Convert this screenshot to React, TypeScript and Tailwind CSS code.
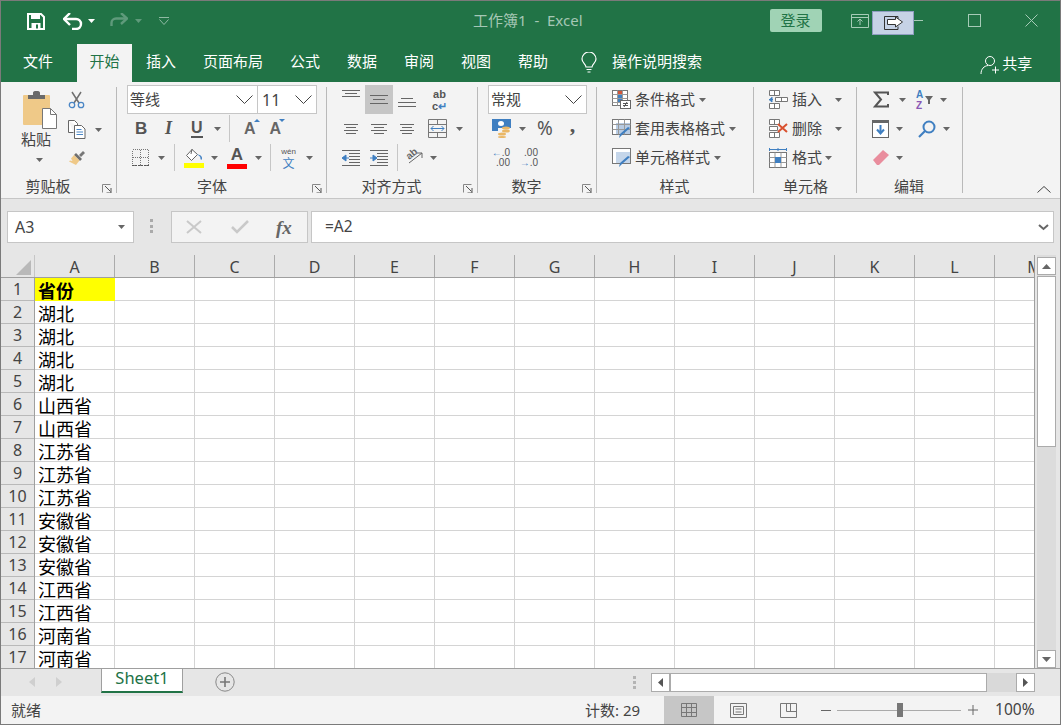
import type { ReactNode } from 'react';

const cjk = { fontFamily: '"Noto Sans CJK SC", "Noto Sans", sans-serif' };

const rows = ['省份', '湖北', '湖北', '湖北', '湖北', '山西省', '山西省', '江苏省', '江苏省', '江苏省', '安徽省', '安徽省', '安徽省', '江西省', '江西省', '河南省', '河南省'];
const cols = ['A', 'B', 'C', 'D', 'E', 'F', 'G', 'H', 'I', 'J', 'K', 'L', 'M'];

function Caret({ className = 'ml-[8px]', color = '#666' }: { className?: string; color?: string }) {
  return (
    <svg width="7" height="4" viewBox="0 0 7 4" className={`shrink-0 ${className}`}>
      <path d="M0 0h7L3.500 4z" fill={color} />
    </svg>
  );
}

function Chevron({ className = '' }: { className?: string }) {
  return (
    <svg width="17" height="9" viewBox="0 0 17 9" className={className}>
      <path d="M.5.500l8 8 8-8" fill="none" stroke="#444" />
    </svg>
  );
}

function Launcher({ className = '' }: { className?: string }) {
  return (
    <svg width="10" height="9" viewBox="0 0 10 9" className={className}>
      <path d="M.5 8.500v-8h8" fill="none" stroke="#888" />
      <path d="M3 2l5.500 5.500M9 4v5H4.500" fill="none" stroke="#555" />
    </svg>
  );
}

function Lines({ w = 18, widths, gap = 3 }: { w?: number; widths: number[]; gap?: number }) {
  const h = (widths.length - 1) * gap + 1;
  return (
    <svg width={w} height={h} viewBox={`0 0 ${w} ${h}`}>
      {widths.map((x, i) => (
        <rect key={i} x={(w - x) / 2} y={i * gap} width={x} height="1" fill="#666" />
      ))}
    </svg>
  );
}

function Group({ w, label, launcher, children, labelClass }: { w: number; label: string; launcher?: boolean; children: ReactNode; labelClass?: string }) {
  return (
    <div className="relative flex shrink-0 flex-col" style={{ width: w }}>
      <div className="h-[87px] shrink-0">{children}</div>
      <div className={`h-[28px] pt-[6px] text-center text-[15px] leading-[22px] text-[#444] ${labelClass ?? ''}`}>{label}</div>
      <div className="absolute right-0 top-[5px] h-[106px] w-px bg-[#b9b9b9]" />
      {launcher && <Launcher className="absolute right-[5px] top-[102px]" />}
    </div>
  );
}

function Row({ className = '', children }: { className?: string; children: ReactNode }) {
  return <div className={`flex h-[29px] items-center ${className}`}>{children}</div>;
}

function Sep() {
  return <div className="h-[27px] w-px bg-[#c6c6c6]" />;
}

function PasteIcon() {
  return (
    <svg width="35" height="40" viewBox="0 0 35 40">
      <rect x="0" y="5" width="27" height="30" rx="1" fill="#efc988" />
      <path d="M5 9V5h5V2.500a2 2 0 0 1 2-1.500h3a2 2 0 0 1 2 1.500V5h5v4z" fill="#6a6a6a" />
      <path d="M19.500 18.500h8l6 6v14h-14z" fill="#fff" stroke="#777" />
      <path d="M27.500 18.500v6h6" fill="none" stroke="#777" />
    </svg>
  );
}

function ScissorsIcon() {
  return (
    <svg width="17" height="18" viewBox="0 0 17 18">
      <path d="M4 1l7 11M13 1L6 12" stroke="#6f6f6f" strokeWidth="1.500" fill="none" />
      <circle cx="4" cy="14" r="2.700" fill="none" stroke="#4a86c5" strokeWidth="1.300" />
      <circle cx="13" cy="14" r="2.700" fill="none" stroke="#4a86c5" strokeWidth="1.300" />
    </svg>
  );
}

function CopyIcon() {
  return (
    <svg width="18" height="19" viewBox="0 0 18 19">
      <path d="M.5.500h6l3 3v3M.5.500v12h5" fill="#fff" stroke="#666" />
      <path d="M6.500 5.500h7l3.500 3.500v9.500H6.500z" fill="#fff" stroke="#666" />
      <path d="M8.500 9.500h5M8.500 12h6.500M8.500 14.500h6.500" stroke="#4a86c5" />
    </svg>
  );
}

function BrushIcon() {
  return (
    <svg width="18" height="16" viewBox="0 0 18 16">
      <path d="M11 5l4-4 2 2-4 4z" fill="#777" />
      <path d="M8 3l6 6-2 2-6-6z" fill="#6f6f6f" />
      <path d="M6 5l5.500 5.500L8 15 1 11.500l1-1 2.500.5L3 8.500z" fill="#efc988" />
    </svg>
  );
}

function BordersIcon() {
  return (
    <svg width="17" height="17" viewBox="0 0 17 17" shapeRendering="crispEdges">
      <path d="M.5.500h16v16H.5zM8.500.500v16M.5 8.500h16" fill="none" stroke="#777" strokeDasharray="1 1" />
      <path d="M0 16.500h17" stroke="#555" strokeDasharray="2 1" />
    </svg>
  );
}

function FillIcon() {
  return (
    <svg width="20" height="20" viewBox="0 0 20 20">
      <path d="M8 1.500L2.500 7.500l5 5 6-6z" fill="#fff" stroke="#666" />
      <path d="M8 1l-1 5" stroke="#666" />
      <path d="M13.500 6.500c2 0 4 1 4.500 3v1.500c0 1-1.500 1-1.500 0 0-2-1-3.500-3-4z" fill="#4a86c5" />
      <rect x="0" y="15" width="20" height="5" fill="#ffff00" />
    </svg>
  );
}

function AccountingIcon() {
  return (
    <svg width="19" height="19" viewBox="0 0 19 19">
      <rect x="0" y="0" width="19" height="9" fill="#3f7fc1" />
      <path d="M0 9h6v3H0z" fill="#3f7fc1" />
      <ellipse cx="9" cy="4.500" rx="3" ry="2.500" fill="#fff" />
      <ellipse cx="14" cy="9" rx="4" ry="1.500" fill="#eab765" />
      <ellipse cx="14" cy="12" rx="4" ry="1.500" fill="#eab765" />
      <ellipse cx="10" cy="15" rx="4" ry="1.500" fill="#eab765" />
      <ellipse cx="10" cy="18" rx="4" ry="1" fill="#eab765" />
    </svg>
  );
}

function IndentIcon({ right }: { right?: boolean }) {
  return (
    <svg width="18" height="16" viewBox="0 0 18 16">
      <path d="M0 .5h18M7 3.500h11M7 6.500h11M7 9.500h11M7 12.500h11M0 15.500h18" stroke="#666" />
      {right ? <path d="M0 8h3V5l4 3-4 3V8" fill="#3f7fc1" stroke="#3f7fc1" /> : <path d="M7 8H4V5L0 8l4 3V8" fill="#3f7fc1" stroke="#3f7fc1" />}
    </svg>
  );
}

function TableStyleIcon({ brush }: { brush?: boolean }) {
  return (
    <svg width="19" height="19" viewBox="0 0 19 19">
      <rect x=".5" y=".5" width="18" height="15" fill="#fff" stroke="#777" />
      <rect x="4" y="4" width="14" height="11" fill={brush ? '#b7cbe3' : '#c5d6ea'} />
      {brush && <path d="M.5 5.500h18M.5 10.500h18M6.500.5v15M12.500.5v15" stroke="#999" />}
      <path d="M18 9l-8 7-3 3 1-4 8-7z" fill="#3f7fc1" />
    </svg>
  );
}

function CondIcon() {
  return (
    <svg width="19" height="19" viewBox="0 0 19 19">
      <rect x=".5" y=".5" width="15" height="15" fill="#fff" stroke="#777" />
      <path d="M5.500.5v15M10.500.5v15M.5 4.500h15M.5 8.500h15M.5 12.500h15" stroke="#999" />
      <rect x="6" y="1" width="4" height="3" fill="#d2553a" />
      <rect x="6" y="5" width="4" height="3" fill="#3f7fc1" />
      <rect x="6" y="9" width="4" height="3" fill="#3f7fc1" />
      <rect x="8.500" y="10.500" width="10" height="8" fill="#fff" stroke="#666" />
      <path d="M11 13.500h5M11 15.500h5M12 17l3-5" stroke="#555" />
    </svg>
  );
}

function CellsIcon({ kind }: { kind: 'insert' | 'delete' | 'format' }) {
  if (kind === 'format') {
    return (
      <svg width="18" height="20" viewBox="0 0 18 20">
        <path d="M0 1.500h18M.5 0v3M9 0v3M17.500 0v3" stroke="#3f7fc1" />
        <rect x=".5" y="4.500" width="17" height="15" fill="#fff" stroke="#777" />
        <path d="M6 4.500v15M12 4.500v15M.5 9.500h17M.5 14.500h17" stroke="#999" />
        <rect x="6" y="9" width="6" height="6" fill="#3f7fc1" />
      </svg>
    );
  }
  return (
    <svg width="19" height="19" viewBox="0 0 19 19">
      <path d="M.5.500h10v5H.5zM5.500.500v5M.5 13.500h10v5H.5zM5.500 13.500v5" fill="#fff" stroke="#777" />
      {kind === 'insert' ? (
        <>
          <path d="M6.500 7.500h12v4h-12zM12.500 7.500v4" fill="#fff" stroke="#777" />
          <path d="M0 9.500h4M3 7v5L0 9.500" fill="#3f7fc1" stroke="#3f7fc1" />
        </>
      ) : (
        <>
          <path d="M.5 7.500h8v4h-8z" fill="#fff" stroke="#777" />
          <path d="M9 5l9 8M18 5l-9 8" stroke="#d9512f" strokeWidth="2" />
        </>
      )}
    </svg>
  );
}

function Cells() {
  return (
    <div className="flex h-[23px] shrink-0">
      {cols.map(c => (
        <div key={c} className="h-full w-[80px] shrink-0 border-b border-r border-[#d4d4d4] bg-white" />
      ))}
    </div>
  );
}

export default function App() {
  return (
    <div className="flex h-[725px] w-[1061px] flex-col overflow-hidden border border-[#7a7a7a] bg-[#e6e6e6] text-[15px] text-[#444]" style={cjk}>
      <div className="relative h-[81px] shrink-0 bg-[#217346] text-white">
        {/* title row */}
        <div className="flex h-[40px] items-center">
          <svg width="18" height="17" viewBox="0 0 18 17" className="ml-[26px]">
            <path d="M1 1h13l3 3v12H1z" fill="none" stroke="#fff" strokeWidth="2" />
            <path d="M4 1h9v5H4zM4.500 10h9v6h-9z" fill="#fff" />
            <rect x="9" y="11.500" width="2" height="4" fill="#217346" />
          </svg>
          <svg width="20" height="17" viewBox="0 0 20 17" className="ml-[18px]">
            <path d="M2 6h11a5 5 0 0 1 0 10H9" fill="none" stroke="#fff" strokeWidth="2.400" />
            <path d="M7 0L1 6l6 6" fill="none" stroke="#fff" strokeWidth="2.400" />
          </svg>
          <Caret className="ml-[5px]" color="#fff" />
          <svg width="19" height="15" viewBox="0 0 19 15" className="ml-[14px] mt-[-2px]">
            <path d="M17 5.500H7a4.500 4.500 0 0 0-4.500 4.500v3" fill="none" stroke="#5f9a7b" strokeWidth="2.400" />
            <path d="M12 0l6 5.500-6 5.500" fill="none" stroke="#5f9a7b" strokeWidth="2.400" />
          </svg>
          <Caret className="ml-[7px]" color="#5f9a7b" />
          <svg width="10" height="8" viewBox="0 0 10 8" className="ml-[17px]">
            <path d="M0 .5h10M.5 2.500L5 7.500l4.500-5" fill="none" stroke="#8fbaa3" />
          </svg>
          <div className="ml-[304px] mt-[-2px] whitespace-pre text-[15px] text-[#a5c7b5]" style={{ fontFamily: '"Noto Sans", "Noto Sans CJK SC", sans-serif' }}>工作簿1  -  Excel</div>
          <div className="ml-[187px] mt-[-2px] flex h-[23px] w-[52px] items-center justify-center rounded-[2px] bg-[#a0d3b5] text-[15px] text-[#217346]">登录</div>
          <svg width="18" height="14" viewBox="0 0 18 14" className="ml-[29px] mt-[-1px]">
            <path d="M.5.500h17v13H.5zM.5 3.500h17" fill="none" stroke="#a6cbb7" />
            <path d="M9 11V5M6.500 7.500L9 5l2.500 2.500" fill="none" stroke="#a6cbb7" />
          </svg>
          <div className="ml-[45px] mt-[-1px] h-px w-[9px] bg-[#a6cbb7]" />
          <div className="ml-[45px] mt-[-1px] h-[13px] w-[13px] border border-[#a6cbb7]" />
          <svg width="13" height="13" viewBox="0 0 13 13" className="ml-[44px] mt-[-1px]">
            <path d="M.5.500l12 12M12.500.500l-12 12" stroke="#a6cbb7" />
          </svg>
        </div>
        {/* floating button sitting over the window controls */}
        <div className="absolute left-[871px] top-[10px] flex h-[24px] w-[42px] items-center justify-center border border-[#8f9dc0] bg-[#c6d2e6]">
          <svg width="19" height="14" viewBox="0 0 19 14">
            <path d="M14 .5H.5v13H14v-3M14 3.500V.5" fill="none" stroke="#333" />
            <path d="M3.500 3.500h8V1l7 5-7 5V8.500h-8z" fill="#fff" stroke="#333" />
          </svg>
        </div>
        {/* tab row */}
        <div className="flex h-[41px] items-end text-[15px]">
          <div className="ml-[22px] h-[38px] w-[30px] whitespace-nowrap leading-[34px]">文件</div>
          <div className="ml-[24px] h-[38px] w-[55px] bg-[#f3f3f3] text-center leading-[34px] text-[#217346]">开始</div>
          <div className="ml-[14px] flex h-[38px] gap-[27px] whitespace-nowrap leading-[34px]">
            <span>插入</span>
            <span>页面布局</span>
            <span>公式</span>
            <span>数据</span>
            <span>审阅</span>
            <span>视图</span>
            <span>帮助</span>
          </div>
          <svg width="16" height="21" viewBox="0 0 16 21" className="mb-[9px] ml-[33px]">
            <path d="M5 15c0-3-4-4-4-8a7 7 0 0 1 14 0c0 4-4 5-4 8z" fill="none" stroke="#fff" strokeWidth="1.200" />
            <path d="M5.500 17.500h5M6.500 20h3" stroke="#fff" />
          </svg>
          <div className="ml-[15px] h-[38px] whitespace-nowrap leading-[34px]">操作说明搜索</div>
          <svg width="20" height="20" viewBox="0 0 20 20" className="mb-[7px] ml-[278px]">
            <circle cx="10" cy="6" r="4.500" fill="none" stroke="#fff" />
            <path d="M1 19c0-5 3-8 7-8.500M12 15h7M15.500 11.500v7" fill="none" stroke="#fff" />
          </svg>
          <div className="ml-[2px] h-[37px] whitespace-nowrap leading-[36px]">共享</div>
        </div>
      </div>

      {/* ribbon */}
      <div className="flex h-[117px] shrink-0 border-b border-[#c6c6c6] bg-[#f3f3f3]">
        <Group w={116} label="剪贴板" launcher labelClass="pr-[22px]">
          <div className="flex pt-[8px]">
            <div className="ml-[22px] flex w-[35px] flex-col items-start">
              <PasteIcon />
              <div className="ml-[-2px] mt-[-2px] text-[15px] leading-[22px]">粘贴</div>
              <Caret className="ml-[13px] mt-[8px]" />
            </div>
            <div className="ml-[10px] flex flex-col">
              <div className="mt-px"><ScissorsIcon /></div>
              <div className="mt-[11px] flex items-center"><CopyIcon /><Caret className="ml-[9px]" /></div>
              <div className="mt-[11px]"><BrushIcon /></div>
            </div>
          </div>
        </Group>

        <Group w={210} label="字体" launcher labelClass="pr-[20px]">
          <div className="pt-[3px]">
            <div className="ml-[10px] flex h-[29px] w-[190px] text-[15px]">
              <div className="flex w-[131px] items-center justify-between border border-[#c6c6c6] bg-white pl-[2px] pr-[4px]">等线<Chevron /></div>
              <div className="flex w-[59px] items-center justify-between border border-l-0 border-[#c6c6c6] bg-white pl-[4px] pr-[4px] text-[16px]" style={{ fontFamily: '"Noto Sans", sans-serif' }}>11<Chevron /></div>
            </div>
            <Row>
              <span className="ml-[18px] w-[12px] text-[17px] font-bold text-[#555]" style={{ fontFamily: '"Liberation Sans", sans-serif' }}>B</span>
              <span className="ml-[18px] w-[10px] text-[18px] font-bold italic text-[#555]" style={{ fontFamily: '"Liberation Serif", serif' }}>I</span>
              <span className="ml-[16px] w-[12px] border-b-2 border-[#555] text-[16px] font-bold leading-[16px] text-[#555]" style={{ fontFamily: '"Liberation Sans", sans-serif' }}>U</span>
              <Caret className="ml-[11px]" />
              <div className="ml-[8px]"><Sep /></div>
              <span className="relative ml-[14px] text-[16px] font-bold text-[#666]" style={{ fontFamily: '"Liberation Sans", sans-serif' }}>A<span className="absolute right-[-4px] top-[2px] h-0 w-0 border-x-[3px] border-b-[3px] border-x-transparent border-b-[#3f7fc1]" /></span>
              <span className="relative ml-[14px] text-[16px] font-bold text-[#666]" style={{ fontFamily: '"Liberation Sans", sans-serif' }}>A<span className="absolute right-[-4px] top-[2px] h-0 w-0 border-x-[3px] border-t-[3px] border-x-transparent border-t-[#3f7fc1]" /></span>
            </Row>
            <Row>
              <div className="ml-[15px]"><BordersIcon /></div>
              <Caret className="ml-[9px]" />
              <div className="ml-[9px]"><Sep /></div>
              <div className="ml-[9px]"><FillIcon /></div>
              <Caret className="ml-[7px]" />
              <div className="ml-[9px] flex w-[20px] flex-col items-center">
                <span className="text-[17px] font-bold leading-[15px] text-[#555]" style={{ fontFamily: '"Liberation Sans", sans-serif' }}>A</span>
                <div className="mt-[2px] h-[5px] w-[20px] bg-[#ff0000]" />
              </div>
              <Caret className="ml-[8px]" />
              <div className="ml-[8px]"><Sep /></div>
              <div className="ml-[9px] flex w-[17px] flex-col items-center leading-none">
                <span className="text-[8px] leading-[9px] text-[#555]" style={{ fontFamily: '"Liberation Sans", sans-serif' }}>wén</span>
                <span className="text-[12px] leading-[13px] text-[#3f7fc1]">文</span>
              </div>
              <Caret className="ml-[9px]" />
            </Row>
          </div>
        </Group>

        <Group w={151} label="对齐方式" launcher labelClass="pr-[22px]">
          <div className="pt-[3px]">
            <Row>
              <div className="ml-[15px] flex h-[29px] w-[18px] items-start pt-[5px]"><Lines widths={[18, 12, 18]} /></div>
              <div className="ml-[5px] flex h-[29px] w-[28px] items-center justify-center bg-[#c6c6c6]"><Lines gap={4} widths={[18, 12, 18]} /></div>
              <div className="ml-[5px] flex h-[29px] w-[18px] items-start pt-[13px]"><Lines gap={4} widths={[12, 18, 18]} /></div>
              <div className="ml-[15px] flex w-[17px] flex-col items-center text-[11px] font-bold leading-[12px] text-[#555]" style={{ fontFamily: '"Liberation Sans", sans-serif' }}>
                <span>ab</span>
                <span>c<span className="text-[#3f7fc1]">↵</span></span>
              </div>
            </Row>
            <Row>
              <div className="ml-[17px]"><Lines w={14} widths={[14, 10, 14, 10]} /></div>
              <div className="ml-[13px]"><Lines w={16} widths={[16, 10, 16, 10]} /></div>
              <div className="ml-[13px]"><Lines w={14} widths={[14, 10, 14, 10]} /></div>
              <svg width="19" height="19" viewBox="0 0 19 19" className="ml-[14px]">
                <path d="M.5.500h18v18H.5zM.5 5.500h18M.5 13.500h18M9.500.5v5M9.500 13.500v5" fill="none" stroke="#777" />
                <path d="M3 9.500h13M5.500 7L3 9.500 5.500 12M13.500 7l2.500 2.500L13.500 12" fill="none" stroke="#3f7fc1" />
              </svg>
              <Caret className="ml-[9px]" />
            </Row>
            <Row>
              <div className="ml-[15px]"><IndentIcon /></div>
              <div className="ml-[10px]"><IndentIcon right /></div>
              <div className="ml-[9px]"><Sep /></div>
              <svg width="19" height="19" viewBox="0 0 19 19" className="ml-[8px]">
                <text x="1" y="10" fontSize="10" fontWeight="700" fill="#666" transform="rotate(-40 5 8)" fontFamily="Liberation Sans, sans-serif">ab</text>
                <path d="M3 15l13-10M16 5h-5M16 5v5" fill="none" stroke="#666" />
              </svg>
              <Caret className="ml-[5px]" />
            </Row>
          </div>
        </Group>

        <Group w={119} label="数字" launcher labelClass="pr-[22px]">
          <div className="pt-[3px]">
            <div className="ml-[10px] flex h-[29px] w-[99px] items-center justify-between border border-[#c6c6c6] bg-white pl-[2px] pr-[4px] text-[15px]">常规<Chevron /></div>
            <Row>
              <div className="ml-[14px]"><AccountingIcon /></div>
              <Caret className="ml-[8px]" />
              <span className="ml-[11px] text-[19px] leading-none text-[#555]" style={{ fontFamily: '"Noto Sans", sans-serif' }}>%</span>
              <span className="ml-[17px] mt-[-8px] text-[22px] font-bold leading-none text-[#555]" style={{ fontFamily: '"Liberation Serif", serif' }}>,</span>
            </Row>
            <Row className="text-[10px] font-medium leading-[10px] text-[#555]">
              <div className="ml-[16px] flex w-[16px] flex-col items-end" style={{ fontFamily: '"Liberation Sans", sans-serif' }}>
                <span><span className="text-[#3f7fc1]">←</span>.0</span>
                <span>.00</span>
              </div>
              <div className="ml-[12px] flex w-[16px] flex-col items-end" style={{ fontFamily: '"Liberation Sans", sans-serif' }}>
                <span>.00</span>
                <span><span className="text-[#3f7fc1]">→</span>.0</span>
              </div>
            </Row>
          </div>
        </Group>

        <Group w={157} label="样式" labelClass="pr-[2px]">
          <div className="pt-[3px] text-[15px]">
            <Row><div className="ml-[15px]"><CondIcon /></div><span className="ml-[4px]">条件格式</span><Caret className="ml-[4px]" /></Row>
            <Row><div className="ml-[15px]"><TableStyleIcon brush /></div><span className="ml-[4px]">套用表格格式</span><Caret className="ml-[4px]" /></Row>
            <Row><div className="ml-[15px]"><TableStyleIcon /></div><span className="ml-[4px]">单元格样式</span><Caret className="ml-[4px]" /></Row>
          </div>
        </Group>

        <Group w={103} label="单元格">
          <div className="pt-[3px] text-[15px]">
            <Row><div className="ml-[15px]"><CellsIcon kind="insert" /></div><span className="ml-[4px]">插入</span><Caret className="ml-[13px]" /></Row>
            <Row><div className="ml-[15px]"><CellsIcon kind="delete" /></div><span className="ml-[4px]">删除</span><Caret className="ml-[13px]" /></Row>
            <Row><div className="ml-[15px]"><CellsIcon kind="format" /></div><span className="ml-[5px]">格式</span><Caret className="ml-[3px]" /></Row>
          </div>
        </Group>

        <Group w={106} label="编辑" labelClass="pr-[2px]">
          <div className="pt-[3px]">
            <Row>
              <svg width="16" height="17" viewBox="0 0 16 17" className="ml-[16px]">
                <path d="M15 4V1.500H2L8 8.500 2 15.500h13V13" fill="none" stroke="#555" strokeWidth="2" />
              </svg>
              <Caret className="ml-[10px]" />
              <div className="ml-[10px] h-[21px] w-[15px] text-[10px] font-bold leading-[11px]" style={{ fontFamily: '"Liberation Sans", sans-serif' }}>
                <div className="text-[#3f7fc1]">A</div>
                <div className="text-[#8a57b5]">Z</div>
              </div>
              <svg width="8" height="8" viewBox="0 0 8 8" className="ml-[-6px]">
                <path d="M0 0h8L5 4v4H3V4z" fill="#666" />
              </svg>
              <Caret className="ml-[7px]" />
            </Row>
            <Row>
              <svg width="17" height="18" viewBox="0 0 17 18" className="ml-[15px]">
                <rect x=".5" y=".5" width="16" height="17" fill="#fff" stroke="#666" />
                <rect x="0" y="0" width="17" height="3" fill="#666" />
                <path d="M8.500 5v8M5 9.500l3.500 4 3.500-4" fill="none" stroke="#3f7fc1" strokeWidth="2" />
              </svg>
              <Caret className="ml-[7px]" />
              <svg width="18" height="18" viewBox="0 0 18 18" className="ml-[15px]">
                <circle cx="11" cy="7" r="5.500" fill="none" stroke="#3f7fc1" strokeWidth="2" />
                <path d="M7 11l-6 6" stroke="#3f7fc1" strokeWidth="2.200" />
              </svg>
              <Caret className="ml-[7px]" />
            </Row>
            <Row>
              <svg width="16" height="15" viewBox="0 0 16 15" className="ml-[16px]">
                <path d="M0 10L10 0l6 5L6 15H4z" fill="#e98d9d" />
              </svg>
              <Caret className="ml-[7px]" />
            </Row>
          </div>
        </Group>

        <div className="flex flex-1 items-end justify-end pb-[5px] pr-[9px]">
          <svg width="14" height="7" viewBox="0 0 14 7"><path d="M.5 6.500L7 .5l6.500 6" fill="none" stroke="#444" /></svg>
        </div>
      </div>

      {/* formula bar */}
      <div className="flex h-[56px] shrink-0 items-start pt-[12px]">
        <div className="ml-[6px] flex h-[32px] w-[127px] items-center justify-between border border-[#c6c6c6] bg-white pl-[7px] pr-[8px] text-[16px]" style={{ fontFamily: '"Noto Sans", sans-serif' }}>A3<Caret className="ml-0" /></div>
        <div className="ml-[16px] mt-[8px] flex h-[14px] w-[5px] flex-col justify-between">
          <div className="h-[3px] w-[3px] bg-[#aaa]" />
          <div className="h-[3px] w-[3px] bg-[#aaa]" />
          <div className="h-[3px] w-[3px] bg-[#aaa]" />
        </div>
        <div className="ml-[16px] flex h-[32px] w-[137px] items-center border border-[#c6c6c6] bg-[#f3f3f3]">
          <svg width="16" height="14" viewBox="0 0 16 14" className="ml-[14px]"><path d="M1 1l14 12M15 1L1 13" stroke="#c9c9c9" strokeWidth="2" /></svg>
          <svg width="18" height="14" viewBox="0 0 18 14" className="ml-[29px]"><path d="M1 7l5 5L17 1" fill="none" stroke="#c9c9c9" strokeWidth="2.600" /></svg>
          <span className="ml-[27px] text-[19px] font-bold italic leading-none text-[#666]" style={{ fontFamily: '"Liberation Serif", serif' }}>fx</span>
        </div>
        <div className="ml-[3px] flex h-[32px] w-[743px] items-center justify-between border border-[#c6c6c6] bg-white pl-[13px] pr-[4px] text-[15.500px]" style={{ fontFamily: '"Noto Sans", sans-serif' }}>
          =A2
          <svg width="11" height="7" viewBox="0 0 11 7"><path d="M1 1l4.500 4L10 1" fill="none" stroke="#666" strokeWidth="2" /></svg>
        </div>
      </div>

      {/* sheet */}
      <div className="flex h-[413px] shrink-0">
        <div className="w-[1034px] shrink-0 overflow-hidden border-r border-[#9f9f9f]">
          <div className="flex h-[23px] border-b border-[#9f9f9f]">
            <div className="relative w-[34px] shrink-0 border-r border-[#c6c6c6]">
              <svg width="15" height="15" viewBox="0 0 15 15" className="absolute bottom-[2px] right-[3px]"><path d="M15 0v15H0z" fill="#b9b9b9" /></svg>
            </div>
            {cols.map(c => (
              <div key={c} className="w-[80px] shrink-0 border-r border-[#ababab] text-center text-[16px] leading-[24px] text-[#444]" style={{ fontFamily: '"Noto Sans", sans-serif' }}>{c}</div>
            ))}
          </div>
          <div className="flex">
            <div className="w-[34px] shrink-0 border-r border-[#9f9f9f]">
              {rows.map((_, i) => (
                <div key={i} className="h-[23px] border-b border-[#b9b9b9] text-center text-[16px] leading-[23px]" style={{ fontFamily: '"Noto Sans", sans-serif' }}>{i + 1}</div>
              ))}
            </div>
            <div className="relative flex flex-col">
              {rows.map((_, i) => <Cells key={i} />)}
              <div className="absolute left-0 top-0 flex flex-col">
                {rows.map((r, i) => (
                  <div key={i} className={`h-[23px] w-[80px] pl-[3px] text-[18px] leading-[24px] text-black ${i === 0 ? 'bg-[#ffff00] font-bold' : ''}`}>{r}</div>
                ))}
              </div>
            </div>
          </div>
        </div>
        <div className="ml-[2px] flex w-[19px] shrink-0 flex-col bg-[#dcdcdc]">
          <div className="mt-[2px] flex h-[18px] shrink-0 items-center justify-center border border-[#ababab] bg-white"><svg width="9" height="5" viewBox="0 0 9 5"><path d="M4.500 0L9 5H0z" fill="#666" /></svg></div>
          <div className="mt-px h-[171px] shrink-0 border border-[#ababab] bg-white" />
          <div className="flex-1" />
          <div className="flex h-[18px] shrink-0 items-center justify-center border border-[#ababab] bg-white"><svg width="9" height="5" viewBox="0 0 9 5"><path d="M4.500 5L9 0H0z" fill="#666" /></svg></div>
        </div>
      </div>

      {/* sheet tabs */}
      <div className="flex h-[28px] shrink-0 border-t border-[#9f9f9f]">
        <svg width="6" height="10" viewBox="0 0 6 10" className="ml-[28px] mt-[8px]"><path d="M6 0v10L0 5z" fill="#cfcfcf" /></svg>
        <svg width="6" height="10" viewBox="0 0 6 10" className="ml-[21px] mt-[8px]"><path d="M0 0v10l6-5z" fill="#cfcfcf" /></svg>
        <div className="ml-[39px] h-[24px] w-[82px] border-x border-b-2 border-x-[#9f9f9f] border-b-[#217346] bg-white text-center text-[16.500px] leading-[18px] text-[#217346]" style={{ fontFamily: '"Noto Sans", sans-serif' }}>Sheet1</div>
        <svg width="20" height="20" viewBox="0 0 20 20" className="ml-[32px] mt-[3px]">
          <circle cx="10" cy="10" r="9.200" fill="none" stroke="#888" />
          <path d="M10 5v10M5 10h10" stroke="#777" strokeWidth="1.600" />
        </svg>
        <div className="ml-[398px] mt-[7px] flex h-[13px] w-[3px] flex-col justify-between">
          <div className="h-[3px] bg-[#b4b4b4]" />
          <div className="h-[3px] bg-[#b4b4b4]" />
          <div className="h-[3px] bg-[#b4b4b4]" />
        </div>
        <div className="ml-[15px] mt-[4px] flex h-[19px] w-[384px] bg-[#d9d9d9]">
          <div className="flex w-[19px] items-center justify-center border border-[#ababab] bg-white"><svg width="5" height="9" viewBox="0 0 5 9"><path d="M5 0v9L0 4.500z" fill="#555" /></svg></div>
          <div className="w-[317px] border border-[#ababab] bg-white" />
          <div className="flex-1" />
          <div className="flex w-[19px] items-center justify-center border border-[#ababab] bg-white"><svg width="5" height="9" viewBox="0 0 5 9"><path d="M0 0v9l5-4.500z" fill="#555" /></svg></div>
        </div>
      </div>

      {/* status bar */}
      <div className="flex h-[28px] shrink-0 items-center bg-[#f3f3f3] text-[15px]">
        <span className="ml-[10px]">就绪</span>
        <span className="ml-[544px] whitespace-nowrap" style={{ fontFamily: '"Noto Sans", "Noto Sans CJK SC", sans-serif' }}>计数: 29</span>
        <div className="ml-[24px] flex h-[28px] w-[50px] items-center justify-center bg-[#c6c6c6]">
          <svg width="16" height="14" viewBox="0 0 16 14"><path d="M.5.500h15v13H.5zM5.500.500v13M10.500.500v13M.5 4.500h15M.5 9.500h15" fill="none" stroke="#777" /></svg>
        </div>
        <svg width="17" height="15" viewBox="0 0 17 15" className="ml-[16px]"><path d="M.5.500h16v14H.5z" fill="none" stroke="#777" /><path d="M3.500 3.500h10v8h-10zM5.500 6h6M5.500 9h6" fill="none" stroke="#777" /></svg>
        <svg width="17" height="15" viewBox="0 0 17 15" className="ml-[33px]"><path d="M.5.500h16v14H.5zM6.500.500v8h10" fill="none" stroke="#777" /><path d="M10.500.500v8" stroke="#777" /></svg>
        <div className="ml-[24px] h-px w-[10px] bg-[#666]" />
        <div className="relative ml-[6px] h-px w-[124px] bg-[#aaa]">
          <div className="absolute left-[60px] top-[-7px] h-[14px] w-[6px] bg-[#777]" />
        </div>
        <svg width="10" height="10" viewBox="0 0 10 10" className="ml-[7px]"><path d="M0 5h10M5 0v10" stroke="#666" /></svg>
        <span className="ml-[17px] text-[15.500px]" style={{ fontFamily: '"Noto Sans", sans-serif' }}>100%</span>
      </div>
    </div>
  );
}
